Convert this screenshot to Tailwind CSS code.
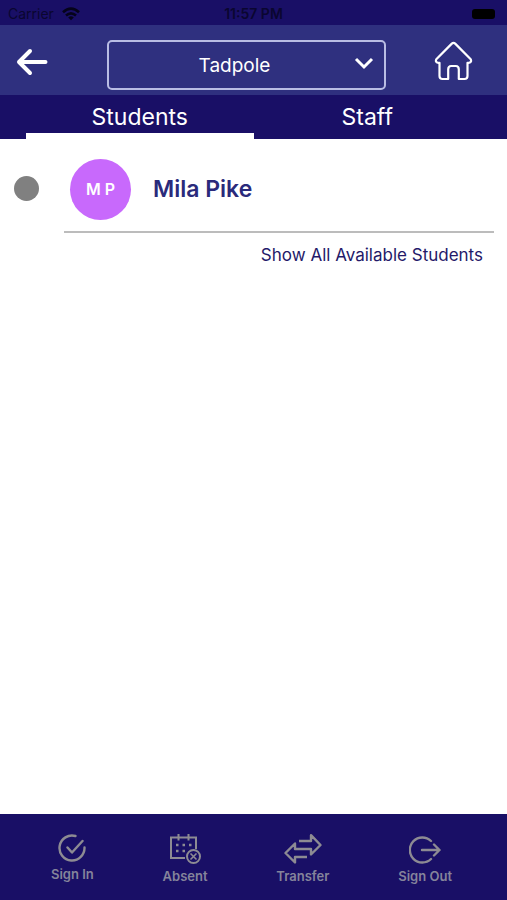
<!DOCTYPE html>
<html lang="en">

<head>
    <meta charset="UTF-8">
    <meta name="viewport" content="width=device-width, initial-scale=1.0">
    <title>Tadpole Room</title>
    <script src="https://cdn.jsdelivr.net/npm/@tailwindcss/browser@4"></script>
</head>

<body class="flex min-h-screen flex-col bg-white font-['Inter',sans-serif] antialiased">
    <!-- Device status bar -->
    <div class="grid h-[25px] grid-cols-3 items-center bg-[#190f66] px-2 pt-[2px] text-sm leading-4 text-[#0a0630]">
        <div class="flex items-center gap-2">
            <span>Carrier</span>
            <svg class="h-[14px] w-[18px]" viewBox="0 0 18 14" fill="none" stroke="#05031a" stroke-width="2.6" aria-hidden="true">
                <path d="M1 5.2Q9-2 17 5.2" />
                <path d="M4 8.6Q9 4.2 14 8.6" />
                <path d="M9 13.2 6.2 10.4Q9 8.2 11.8 10.4Z" fill="#05031a" stroke="none" />
            </svg>
        </div>
        <span class="text-center font-semibold whitespace-nowrap">11:57 PM</span>
        <span class="mr-1 h-[10px] w-[23px] justify-self-end rounded-[3px] bg-black"></span>
    </div>

    <!-- Header with room picker -->
    <header class="flex h-[70px] items-center bg-[#2f307f] px-4 pt-1">
        <button type="button" aria-label="Back" class="w-8 shrink-0 text-white">
            <svg class="h-7 w-8" viewBox="0 0 32 28" fill="none" stroke="currentColor" stroke-width="4" stroke-linecap="round" stroke-linejoin="round">
                <path d="M29.500 14H3M14 3 3 14l11 11" />
            </svg>
        </button>
        <div class="relative mt-[6px] ml-[59px] flex-1">
            <select aria-label="Room" class="block h-[50px] w-full appearance-none rounded-[5px] border-2 border-[#b9bde4] bg-transparent pt-[2px] pr-6 text-[19px] leading-6 text-white [text-align-last:center]">
                <option>Tadpole</option>
            </select>
            <svg class="pointer-events-none absolute top-4 right-3 h-4 w-5" viewBox="0 0 20 16" fill="none" stroke="white" stroke-width="3" aria-hidden="true">
                <path d="m2 3 8 8 8-8" />
            </svg>
        </div>
        <a href="#" aria-label="Home" class="mr-[18px] mb-[2px] ml-12 shrink-0 text-white">
            <svg class="h-[40px] w-[39px]" viewBox="0 0 39 40" fill="none" stroke="currentColor" stroke-width="2.200" stroke-linejoin="round">
                <path d="M17.800 2.600Q19.500 1 21.200 2.600L36.700 18.200Q38 21 35 21.800H33.500V35Q33.500 38 30.500 38H24.800V28.500Q24.800 25 21.800 25H17.200Q14.200 25 14.200 28.500V38H8.500Q5.500 38 5.500 35V21.800H4Q1 21 2.300 18.200Z" />
            </svg>
        </a>
    </header>

    <!-- Tabs -->
    <nav class="grid h-11 grid-cols-2 bg-[#190f66] px-[26px] text-[23px] leading-7 text-white">
        <a href="#" aria-current="page" class="flex justify-center border-b-[6px] border-white pt-2">Students</a>
        <a href="#" class="flex justify-center pt-2">Staff</a>
    </nav>

    <!-- Student list -->
    <main class="flex-1">
        <ul>
            <li class="flex items-center pl-[14px]">
                <input id="mila" type="checkbox" class="mt-1 size-[25px] shrink-0 appearance-none rounded-full bg-[#808080]">
                <label for="mila" class="mr-[13px] ml-[25px] flex h-[94px] flex-1 items-center gap-[22px] border-b-2 border-[#bcbcbc] pt-2 pl-[6px]">
                    <span class="flex size-[61px] items-center justify-center rounded-full bg-[#c869fc] text-base font-semibold text-white">M P</span>
                    <span class="text-[23px] font-semibold text-[#2a2a7b]">Mila Pike</span>
                </label>
            </li>
        </ul>
        <div class="mt-2 mr-6 flex justify-end">
            <a href="#" class="text-[17px] leading-7 text-[#241969]">Show All Available Students</a>
        </div>
    </main>

    <!-- Bottom actions -->
    <footer class="flex h-[86px] justify-between bg-[#190f66] pt-5 pr-[55px] pl-[51px] text-[13px] leading-4 font-semibold text-[#85849b]">
        <button type="button" class="flex flex-col items-center gap-1">
            <svg class="size-7" viewBox="0 0 28 28" fill="none" stroke="#8d8b93" stroke-width="2.400" stroke-linecap="round" stroke-linejoin="round">
                <path d="M17.500 2A12.500 12.500 0 1 0 26.500 13.500M9.500 13.500l4.500 5L24.500 7" />
            </svg>
            Sign In
        </button>
        <button type="button" class="flex flex-col items-center gap-1">
            <svg class="h-[30px] w-[31px]" viewBox="0 0 31 30" fill="none" stroke="#8d8b93" stroke-width="2">
                <path d="M15 24H1V3.500h25V15M8.500 0v6.500M18.500 0v6.500" />
                <path d="M6 11h2.500m4 0H15m4 0h2.500M6 17h2.500m4 0H15" stroke-width="2.500" />
                <circle cx="23.500" cy="22.500" r="6.500" />
                <path d="m20.500 19.500 6 6m0-6-6 6" stroke-width="1.600" />
            </svg>
            Absent
        </button>
        <button type="button" class="flex flex-col items-center gap-1">
            <svg class="h-[30px] w-[38px]" viewBox="0 0 38 30" fill="none" stroke="#8d8b93" stroke-width="2.400" stroke-linejoin="round">
                <path d="M15 7H27V1.200L36.500 11 27 20.500V15H11V9.500L1.500 19 11 28.500V23H23" />
            </svg>
            Transfer
        </button>
        <button type="button" class="flex flex-col items-center gap-1 pt-[2px]">
            <svg class="h-7 w-8" viewBox="0 0 32 28" fill="none" stroke="#8d8b93" stroke-width="2.400" stroke-linecap="round" stroke-linejoin="round">
                <path d="M22 5A12.500 12.500 0 1 0 22 23M13 14H30.500M25 8.500l5.500 5.500-5.500 5.500" />
            </svg>
            Sign Out
        </button>
    </footer>
</body>

</html>
